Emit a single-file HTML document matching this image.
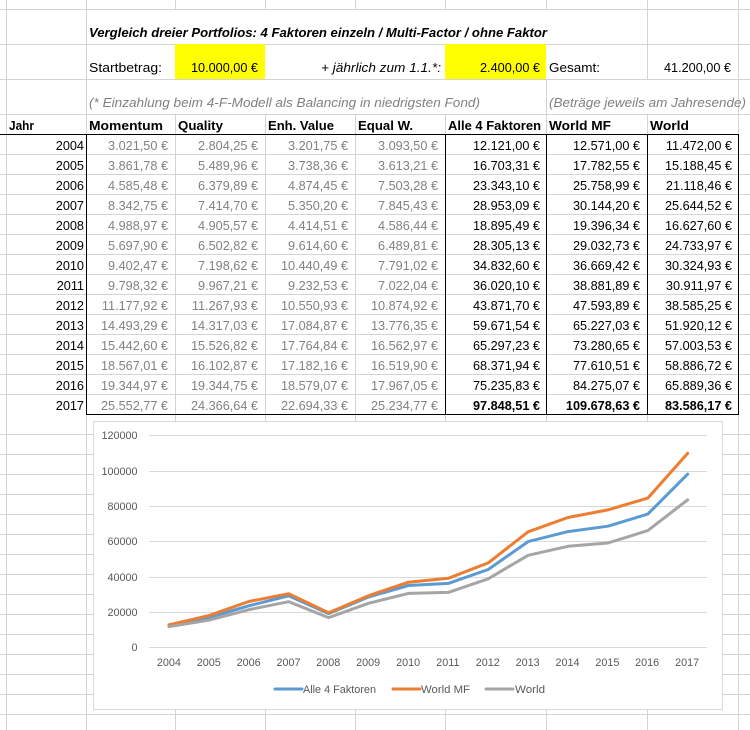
<!DOCTYPE html>
<html lang="de">
<head>
<meta charset="utf-8">
<title>Vergleich dreier Portfolios</title>
<style>
html,body{margin:0;padding:0;background:#fff}
body{position:relative;width:750px;height:730px;overflow:hidden;font-family:"Liberation Sans",sans-serif;font-size:12.7px;color:#000}
svg{position:absolute;left:0;top:0}
.r{position:absolute;left:0;width:750px;height:20px;line-height:20px}
.r span{position:absolute;top:0;white-space:nowrap}
.r span:nth-child(1){right:666px}
.r span:nth-child(2){right:582px;color:#828282}
.r span:nth-child(3){right:492px;color:#828282}
.r span:nth-child(4){right:402px;color:#828282}
.r span:nth-child(5){right:312px;color:#828282}
.r span:nth-child(6){right:210px}
.r span:nth-child(7){right:110px}
.r span:nth-child(8){right:18px}
.b span:nth-child(n+6){font-weight:bold}
</style>
</head>
<body>
<svg width="750" height="730" viewBox="0 0 750 730" font-family="'Liberation Sans',sans-serif">
<g stroke="#d4d4d4" stroke-width="1" shape-rendering="crispEdges">
<path d="M0 9.5H750M0 44.5H750M0 79.5H750M0 114.5H750M0 154.5H750M0 174.5H750M0 194.5H750M0 214.5H750M0 234.5H750M0 254.5H750M0 274.5H750M0 294.5H750M0 314.5H750M0 334.5H750M0 354.5H750M0 374.5H750M0 394.5H750M0 434.5H750M0 454.5H750M0 474.5H750M0 494.5H750M0 514.5H750M0 534.5H750M0 554.5H750M0 574.5H750M0 594.5H750M0 614.5H750M0 634.5H750M0 654.5H750M0 674.5H750M0 694.5H750M0 714.5H750" fill="none"/>
<path d="M6.5 0V730M738.5 0V730M86.5 0V730M175.5 0V9M265.5 0V9M355.5 0V9M445.5 0V9M546.5 0V9M647.5 0V9M647.5 9V79M546.5 79V134M175.5 114V730M265.5 114V730M355.5 114V730M445.5 114V730M546.5 114V730M647.5 114V730" fill="none"/>
</g>
<rect x="175" y="44" width="90" height="35" fill="#ffff00"/>
<rect x="445" y="44" width="101" height="35" fill="#ffff00"/>
<g stroke="#000" stroke-width="1" shape-rendering="crispEdges" fill="none">
<path d="M0 134.5H739M86.5 134V415M445.5 134V415M546.5 134V415M647.5 134V415M738.5 134V415M86 414.5H739"/>
</g>
<g font-size="13" fill="#000">
<text x="89" y="37" font-weight="bold" font-style="italic" textLength="458" lengthAdjust="spacingAndGlyphs">Vergleich dreier Portfolios: 4 Faktoren einzeln / Multi-Factor / ohne Faktor</text>
<text x="89" y="72" textLength="73" lengthAdjust="spacingAndGlyphs">Startbetrag:</text>
<text x="191" y="72" textLength="67" lengthAdjust="spacingAndGlyphs">10.000,00 €</text>
<text x="321" y="72" font-style="italic" textLength="120" lengthAdjust="spacingAndGlyphs">+ jährlich zum 1.1.*:</text>
<text x="480" y="72" textLength="60" lengthAdjust="spacingAndGlyphs">2.400,00 €</text>
<text x="549" y="72" textLength="51" lengthAdjust="spacingAndGlyphs">Gesamt:</text>
<text x="664" y="72" textLength="67" lengthAdjust="spacingAndGlyphs">41.200,00 €</text>
<text x="89" y="107" font-style="italic" fill="#808080" textLength="391" lengthAdjust="spacingAndGlyphs">(* Einzahlung beim 4-F-Modell als Balancing in niedrigsten Fond)</text>
<text x="549" y="107" font-style="italic" fill="#808080" textLength="197" lengthAdjust="spacingAndGlyphs">(Beträge jeweils am Jahresende)</text>
<g font-weight="bold">
<text x="9" y="130" textLength="25" lengthAdjust="spacingAndGlyphs">Jahr</text>
<text x="89" y="130" textLength="74" lengthAdjust="spacingAndGlyphs">Momentum</text>
<text x="178" y="130" textLength="45" lengthAdjust="spacingAndGlyphs">Quality</text>
<text x="268" y="130" textLength="66" lengthAdjust="spacingAndGlyphs">Enh. Value</text>
<text x="358" y="130" textLength="55" lengthAdjust="spacingAndGlyphs">Equal W.</text>
<text x="448" y="130" textLength="93" lengthAdjust="spacingAndGlyphs">Alle 4 Faktoren</text>
<text x="549" y="130" textLength="62" lengthAdjust="spacingAndGlyphs">World MF</text>
<text x="650" y="130" textLength="39" lengthAdjust="spacingAndGlyphs">World</text>
</g>
</g>
<rect x="93.5" y="421.5" width="629" height="288" fill="#fff" stroke="#d9d9d9" shape-rendering="crispEdges"/>
<path d="M149 435.5H707M149 471.5H707M149 506.5H707M149 541.5H707M149 577.5H707M149 612.5H707M149 647.5H707" stroke="#d9d9d9" fill="none" shape-rendering="crispEdges"/>
<g font-size="10.8" fill="#595959" text-anchor="end">
<text x="137.5" y="439">120000</text>
<text x="137.5" y="475">100000</text>
<text x="137.5" y="510">80000</text>
<text x="137.5" y="545">60000</text>
<text x="137.5" y="581">40000</text>
<text x="137.5" y="616">20000</text>
<text x="137.5" y="651">0</text>
</g>
<g font-size="10.8" fill="#595959" text-anchor="middle">
<text x="168.9" y="666">2004</text>
<text x="208.8" y="666">2005</text>
<text x="248.6" y="666">2006</text>
<text x="288.5" y="666">2007</text>
<text x="328.3" y="666">2008</text>
<text x="368.2" y="666">2009</text>
<text x="408.1" y="666">2010</text>
<text x="447.9" y="666">2011</text>
<text x="487.8" y="666">2012</text>
<text x="527.6" y="666">2013</text>
<text x="567.5" y="666">2014</text>
<text x="607.4" y="666">2015</text>
<text x="647.2" y="666">2016</text>
<text x="687.1" y="666">2017</text>
</g>
<g fill="none" stroke-width="3" stroke-linejoin="round" stroke-linecap="round">
<polyline stroke="#5B9BD5" points="169,625.6 208.9,617.5 248.8,605.8 288.7,595.8 328.6,613.6 368.5,597 408.4,585.5 448.3,583.4 488.2,569.5 528.1,541.6 568,531.6 607.9,526.2 647.8,514.1 687.7,474.1"/>
<polyline stroke="#ED7D31" points="169,624.8 208.9,615.6 248.8,601.5 288.7,593.7 328.6,612.7 368.5,595.7 408.4,582.2 448.3,578.3 488.2,562.9 528.1,531.8 568,517.5 607.9,509.9 647.8,498.1 687.7,453.2"/>
<polyline stroke="#A5A5A5" points="169,626.7 208.9,620.2 248.8,609.7 288.7,601.7 328.6,617.6 368.5,603.3 408.4,593.4 448.3,592.4 488.2,578.8 528.1,555.3 568,546.3 607.9,543 647.8,530.6 687.7,499.8"/>
<path d="M275 689H302" stroke="#5B9BD5"/>
<path d="M393 689H420" stroke="#ED7D31"/>
<path d="M486 689H513" stroke="#A5A5A5"/>
</g>
<g font-size="10.8" fill="#595959">
<text x="303" y="693" textLength="73" lengthAdjust="spacingAndGlyphs">Alle 4 Faktoren</text>
<text x="421" y="693" textLength="49" lengthAdjust="spacingAndGlyphs">World MF</text>
<text x="515" y="693" textLength="30" lengthAdjust="spacingAndGlyphs">World</text>
</g>
</svg>
<div class="r" style="top:136px"><span>2004</span><span>3.021,50 €</span><span>2.804,25 €</span><span>3.201,75 €</span><span>3.093,50 €</span><span>12.121,00 €</span><span>12.571,00 €</span><span>11.472,00 €</span></div>
<div class="r" style="top:156px"><span>2005</span><span>3.861,78 €</span><span>5.489,96 €</span><span>3.738,36 €</span><span>3.613,21 €</span><span>16.703,31 €</span><span>17.782,55 €</span><span>15.188,45 €</span></div>
<div class="r" style="top:176px"><span>2006</span><span>4.585,48 €</span><span>6.379,89 €</span><span>4.874,45 €</span><span>7.503,28 €</span><span>23.343,10 €</span><span>25.758,99 €</span><span>21.118,46 €</span></div>
<div class="r" style="top:196px"><span>2007</span><span>8.342,75 €</span><span>7.414,70 €</span><span>5.350,20 €</span><span>7.845,43 €</span><span>28.953,09 €</span><span>30.144,20 €</span><span>25.644,52 €</span></div>
<div class="r" style="top:216px"><span>2008</span><span>4.988,97 €</span><span>4.905,57 €</span><span>4.414,51 €</span><span>4.586,44 €</span><span>18.895,49 €</span><span>19.396,34 €</span><span>16.627,60 €</span></div>
<div class="r" style="top:236px"><span>2009</span><span>5.697,90 €</span><span>6.502,82 €</span><span>9.614,60 €</span><span>6.489,81 €</span><span>28.305,13 €</span><span>29.032,73 €</span><span>24.733,97 €</span></div>
<div class="r" style="top:256px"><span>2010</span><span>9.402,47 €</span><span>7.198,62 €</span><span>10.440,49 €</span><span>7.791,02 €</span><span>34.832,60 €</span><span>36.669,42 €</span><span>30.324,93 €</span></div>
<div class="r" style="top:276px"><span>2011</span><span>9.798,32 €</span><span>9.967,21 €</span><span>9.232,53 €</span><span>7.022,04 €</span><span>36.020,10 €</span><span>38.881,89 €</span><span>30.911,97 €</span></div>
<div class="r" style="top:296px"><span>2012</span><span>11.177,92 €</span><span>11.267,93 €</span><span>10.550,93 €</span><span>10.874,92 €</span><span>43.871,70 €</span><span>47.593,89 €</span><span>38.585,25 €</span></div>
<div class="r" style="top:316px"><span>2013</span><span>14.493,29 €</span><span>14.317,03 €</span><span>17.084,87 €</span><span>13.776,35 €</span><span>59.671,54 €</span><span>65.227,03 €</span><span>51.920,12 €</span></div>
<div class="r" style="top:336px"><span>2014</span><span>15.442,60 €</span><span>15.526,82 €</span><span>17.764,84 €</span><span>16.562,97 €</span><span>65.297,23 €</span><span>73.280,65 €</span><span>57.003,53 €</span></div>
<div class="r" style="top:356px"><span>2015</span><span>18.567,01 €</span><span>16.102,87 €</span><span>17.182,16 €</span><span>16.519,90 €</span><span>68.371,94 €</span><span>77.610,51 €</span><span>58.886,72 €</span></div>
<div class="r" style="top:376px"><span>2016</span><span>19.344,97 €</span><span>19.344,75 €</span><span>18.579,07 €</span><span>17.967,05 €</span><span>75.235,83 €</span><span>84.275,07 €</span><span>65.889,36 €</span></div>
<div class="r b" style="top:396px"><span>2017</span><span>25.552,77 €</span><span>24.366,64 €</span><span>22.694,33 €</span><span>25.234,77 €</span><span>97.848,51 €</span><span>109.678,63 €</span><span>83.586,17 €</span></div>
</body>
</html>
